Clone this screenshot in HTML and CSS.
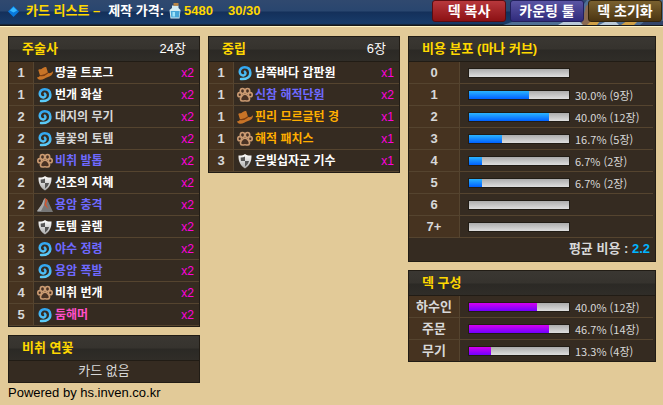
FILE: index.html
```
<!DOCTYPE html>
<html lang="ko">
<head>
<meta charset="utf-8">
<title>카드 리스트</title>
<link rel="stylesheet" href="styles.css">
</head>
<body>
<svg width="0" height="0" class="defs" aria-hidden="true">
  <defs>
    <linearGradient id="blue" gradientUnits="userSpaceOnUse" x1="0" y1="0" x2="0" y2="16"><stop offset="0" stop-color="#2a9fee"/><stop offset="1" stop-color="#62d2fa"/></linearGradient>
    <linearGradient id="steel" x1="0" y1="0" x2="0" y2="1"><stop offset="0" stop-color="#fff"/><stop offset="1" stop-color="#aaa"/></linearGradient>
    <symbol id="swirl" viewBox="0 0 16 16"><path d="M4 14C10 14.500 13.700 11.500 13.300 7.500C13 4 10.500 2.200 7.500 2.300C4.500 2.400 2.600 4.500 2.700 7C2.900 9.300 4.700 10.700 6.500 10.400C8.500 10 9.200 8 7.800 6.700" fill="none" stroke="url(#blue)" stroke-width="2.500" stroke-linecap="round"/></symbol>
    <symbol id="hat" viewBox="0 0 16 16"><path d="M0 12.300C1.500 12.300 2.800 11.600 3 10.500L1.300 5C1.800 3.800 3.500 4.500 4.500 4C6 3 7.500 1.500 9.300 2.200L11 7.800C12.500 8.700 14.300 8 16 6.200C16.200 9.300 14 11 11 11.900C8 12.700 6 15 3 14.700C1.300 14.500 .4 13.700 0 12.300Z" fill="#c87427"/><path d="M3 10.500C6 11.300 8.500 10 11 7.800" fill="none" stroke="#7c3d12" stroke-width="1.200"/></symbol>
    <symbol id="paw" viewBox="0 0 16 16"><g fill="#493224" stroke="#cb9b72" stroke-width="1.600"><ellipse cx="5.500" cy="4" rx="2.200" ry="2.500"/><ellipse cx="10.500" cy="4" rx="2.200" ry="2.500"/><ellipse cx="2.700" cy="7.700" rx="1.900" ry="2.100"/><ellipse cx="13.300" cy="7.700" rx="1.900" ry="2.100"/><path d="M8 7.300C10 7.300 12.800 10 12.500 12.500C12 15 9.700 13.800 8 13.800S4 15 3.500 12.500C3.200 10 6 7.300 8 7.300Z"/></g></symbol>
    <symbol id="shield" viewBox="0 0 16 16"><path d="M8 1C9.700 2.300 12 2.800 14.500 2.500C14.600 8 13 12.300 8 15.500C3 12.300 1.400 8 1.500 2.500C4 2.800 6.300 2.300 8 1Z" fill="url(#steel)"/><path d="M8 3.500V8H4C3.700 6.500 3.600 5.400 3.700 4.400C5.300 4.500 6.700 4.200 8 3.500ZM8 8H12C11.500 10.300 10.300 12 8 13.500Z" fill="#555"/></symbol>
    <symbol id="mountain" viewBox="0 0 16 16"><path d="M8 1L10.500 3L16 15H0L5 7Z" fill="#777"/><path d="M5 7L6.500 3L8 1L7 8L4 14H0Z" fill="#aaa"/><path d="M8 1L10.500 3L9 7L11.500 12L7.500 8L8.500 4Z" fill="#d8532a"/></symbol>
  </defs>
</svg>

<header class="topbar">
  <svg class="gem" viewBox="0 0 12 12" aria-hidden="true"><path d="M6 0L12 6L6 12L0 6Z" fill="#0878dc"/><path d="M6 1L10 5L6 7L2 5Z" fill="#35b8ff"/></svg>
  <h1>카드 리스트 –</h1>
  <p class="price"><span>제작 가격:</span>
    <svg class="bottle" viewBox="0 0 12 16" aria-hidden="true"><path d="M3 2.500H9.500V5L11.500 7L10.500 15.500H1.500L.5 7L3 5Z" fill="#d4ecf3"/><path d="M1.700 8H10.700L10 14.500H2.300Z" fill="#48a6d8"/><path d="M3.500 9H6V13.500H3.500Z" fill="#9ee4fa"/><path d="M4.500 0H9.500V2.800H4.500Z" fill="#b98547"/></svg>
    <b>5480</b></p>
  <b class="total">30/30</b>
  <nav class="actions">
    <svg class="art" viewBox="0 0 160 25" preserveAspectRatio="none" aria-hidden="true">
      <path d="M0 25L12 21L50 22L75 12L84 0H160V25Z" fill="#4f6f94"/>
      <path d="M78 25L83 6L92 0V25Z" fill="#8a6a52"/>
      <path d="M55 25L62 21H76L80 25ZM96 25L104 21H112L116 25Z" fill="#b9c9d8"/>
      <path d="M84 25L88 21H97L94 25ZM118 25L124 21H135L131 25Z" fill="#d0a046"/>
      <path d="M137 25L142 21H160V25Z" fill="#33456a"/>
    </svg>
    <button class="btn red" type="button">덱 복사</button>
    <button class="btn violet" type="button">카운팅 툴</button>
    <button class="btn brown" type="button">덱 초기화</button>
  </nav>
</header>

<main class="columns">
  <div class="column">
    <section class="panel">
      <div class="head"><h2>주술사</h2><span>24장</span></div>
      <table class="cards">
        <tr><th>1</th><td><a href="#" class="plain"><svg><use href="#hat"/></svg>땅굴 트로그</a></td><td class="qty">x2</td></tr>
        <tr><th>1</th><td><a href="#" class="plain"><svg><use href="#swirl"/></svg>번개 화살</a></td><td class="qty">x2</td></tr>
        <tr><th>2</th><td><a href="#" class="basic"><svg><use href="#swirl"/></svg>대지의 무기</a></td><td class="qty">x2</td></tr>
        <tr><th>2</th><td><a href="#" class="basic"><svg><use href="#swirl"/></svg>불꽃의 토템</a></td><td class="qty">x2</td></tr>
        <tr><th>2</th><td><a href="#" class="rare"><svg><use href="#paw"/></svg>비취 발톱</a></td><td class="qty">x2</td></tr>
        <tr><th>2</th><td><a href="#" class="plain"><svg><use href="#shield"/></svg>선조의 지혜</a></td><td class="qty">x2</td></tr>
        <tr><th>2</th><td><a href="#" class="rare"><svg><use href="#mountain"/></svg>용암 충격</a></td><td class="qty">x2</td></tr>
        <tr><th>2</th><td><a href="#" class="plain"><svg><use href="#shield"/></svg>토템 골렘</a></td><td class="qty">x2</td></tr>
        <tr><th>3</th><td><a href="#" class="rare"><svg><use href="#swirl"/></svg>야수 정령</a></td><td class="qty">x2</td></tr>
        <tr><th>3</th><td><a href="#" class="rare"><svg><use href="#swirl"/></svg>용암 폭발</a></td><td class="qty">x2</td></tr>
        <tr><th>4</th><td><a href="#" class="plain"><svg><use href="#paw"/></svg>비취 번개</a></td><td class="qty">x2</td></tr>
        <tr><th>5</th><td><a href="#" class="epic"><svg><use href="#swirl"/></svg>둠해머</a></td><td class="qty">x2</td></tr>
      </table>
    </section>
    <section class="panel">
      <div class="head"><h2>비취 연꽃</h2></div>
      <p class="empty">카드 없음</p>
    </section>
  </div>

  <div class="column">
    <section class="panel">
      <div class="head"><h2>중립</h2><span>6장</span></div>
      <table class="cards">
        <tr><th>1</th><td><a href="#" class="plain"><svg><use href="#swirl"/></svg>남쪽바다 갑판원</a></td><td class="qty">x1</td></tr>
        <tr><th>1</th><td><a href="#" class="rare"><svg><use href="#paw"/></svg>신참 해적단원</a></td><td class="qty">x2</td></tr>
        <tr><th>1</th><td><a href="#" class="legend"><svg><use href="#hat"/></svg>핀리 므르글턴 경</a></td><td class="qty">x1</td></tr>
        <tr><th>1</th><td><a href="#" class="legend"><svg><use href="#paw"/></svg>해적 패치스</a></td><td class="qty">x1</td></tr>
        <tr><th>3</th><td><a href="#" class="plain"><svg><use href="#shield"/></svg>은빛십자군 기수</a></td><td class="qty">x1</td></tr>
      </table>
    </section>
  </div>

  <div class="column">
    <section class="panel">
      <div class="head"><h2>비용 분포 (마나 커브)</h2></div>
      <table class="stats mana">
        <tr><th>0</th><td><div class="stat"><span class="bar"></span></div></td></tr>
        <tr><th>1</th><td><div class="stat"><span class="bar"><i style="width:60%"></i></span>30.0% (9장)</div></td></tr>
        <tr><th>2</th><td><div class="stat"><span class="bar"><i style="width:80%"></i></span>40.0% (12장)</div></td></tr>
        <tr><th>3</th><td><div class="stat"><span class="bar"><i style="width:33%"></i></span>16.7% (5장)</div></td></tr>
        <tr><th>4</th><td><div class="stat"><span class="bar"><i style="width:13%"></i></span>6.7% (2장)</div></td></tr>
        <tr><th>5</th><td><div class="stat"><span class="bar"><i style="width:13%"></i></span>6.7% (2장)</div></td></tr>
        <tr><th>6</th><td><div class="stat"><span class="bar"></span></div></td></tr>
        <tr><th>7+</th><td><div class="stat"><span class="bar"></span></div></td></tr>
      </table>
      <p class="average">평균 비용 : <b>2.2</b></p>
    </section>
    <section class="panel">
      <div class="head"><h2>덱 구성</h2></div>
      <table class="stats kinds">
        <tr><th>하수인</th><td><div class="stat"><span class="bar"><i style="width:68%"></i></span>40.0% (12장)</div></td></tr>
        <tr><th>주문</th><td><div class="stat"><span class="bar"><i style="width:80%"></i></span>46.7% (14장)</div></td></tr>
        <tr><th>무기</th><td><div class="stat"><span class="bar"><i style="width:22%"></i></span>13.3% (4장)</div></td></tr>
      </table>
    </section>
  </div>
</main>
<footer class="credit">Powered by hs.inven.co.kr</footer>
</body>
</html>
```

FILE: styles.css
```
* { box-sizing: border-box; }

body {
  margin: 0;
  background: #e2ca98;
  color: #d8d8d8;
  font: 13px/20px "Liberation Sans", "Noto Sans CJK KR", sans-serif;
}

h1, h2, p { margin: 0; font-size: 13px; }
h1, h2, .total, .price b { color: #ffd800; }

.defs { position: absolute; }

.topbar {
  display: flex;
  align-items: center;
  height: 27px;
  padding: 0 1px 4px 8px;
  border-bottom: 1px solid #fff6c8;
  background: linear-gradient(#30496f 0, #29466f 11px, #14305a 12px, #183b69 23px, #17375f 24px, #171717 25px);
}
.gem { width: 11px; height: 11px; margin-right: 7px; }
.price { display: flex; align-items: center; margin-left: 8px; color: #fff; font-weight: bold; }
.bottle { width: 12px; height: 16px; margin: 0 3px 0 5px; }
.total { margin-left: 15px; }

.actions { position: relative; display: flex; gap: 4px; margin-left: auto; }
.art { position: absolute; right: -1px; top: 0; width: 160px; height: 25px; }
.btn {
  position: relative;
  width: 74px;
  height: 22px;
  padding: 0;
  border: 1px solid;
  border-radius: 3px;
  color: #fff;
  font: bold 14px/18px "Liberation Sans", "Noto Sans CJK KR", sans-serif;
}
.red { border-color: #5b0c10; background: linear-gradient(#b8383c, #8c1114); }
.violet { border-color: #22205c; background: linear-gradient(#5a55a3, #302b7c); }
.brown { border-color: #33240c; background: linear-gradient(#7a6130, #4b3512); }

.columns {
  display: grid;
  grid-template-columns: 192fr 192fr 248fr;
  align-items: start;
  gap: 8px;
  padding: 9px 7px 0 8px;
}
.column { display: grid; gap: 8px; }

.panel { border: 1px solid #211c15; background: #352b21; }
.head {
  display: flex;
  justify-content: space-between;
  align-items: center;
  height: 25px;
  padding: 0 13px;
  border-bottom: 1px solid #211c15;
  background: linear-gradient(#3a3732 0, #36332e 12px, #2b2925 13px, #302d28 100%);
}
.head span { color: #fff; }

table { width: 100%; table-layout: fixed; border-collapse: separate; border-spacing: 0; }
th, td { height: 22px; padding: 0; border-bottom: 1px solid #55442f; line-height: 20px; }
th { border-right: 1px solid #55442f; background: #463320; }

.cards th { width: 25px; }
.cards a {
  display: flex;
  align-items: center;
  padding-left: 3px;
  font-size: 12px;
  font-weight: bold;
  text-decoration: none;
  white-space: nowrap;
}
.cards svg { width: 16px; height: 16px; margin-right: 2px; }
.qty { width: 24px; padding-right: 5px; color: #f0d; font-size: 12px; text-align: right; }

.plain { color: #fff; }
.basic { color: #d8d8d8; }
.rare { color: #6e69ff; }
.epic { color: #ff4fc8; }
.legend { color: #ffae00; }

.stats { width: calc(100% - 2px); }
.stats th { width: 51px; }
.stat {
  display: flex;
  align-items: center;
  gap: 5px;
  padding-left: 8px;
  font-family: "Noto Sans CJK KR", sans-serif;
  font-size: 11px;
}
.bar {
  width: 102px;
  height: 10px;
  border: 1px solid #211c15;
  background: linear-gradient(#acacac, #dedede);
}
.bar i { display: block; height: 100%; }
.mana i { background: linear-gradient(#2bb4ff, #0060ff); }
.kinds i { background: linear-gradient(#d400f0, #7000ff); }
.kinds tr:last-child > * { height: 21px; border-bottom: 0; }

.average { height: 23px; padding: 1px 5px 0 0; font-weight: bold; text-align: right; }
.average b { color: #00b4ff; }
.empty { height: 21px; text-align: center; }
.credit { padding: 0 8px; color: #000; font-size: 13px; }
```
